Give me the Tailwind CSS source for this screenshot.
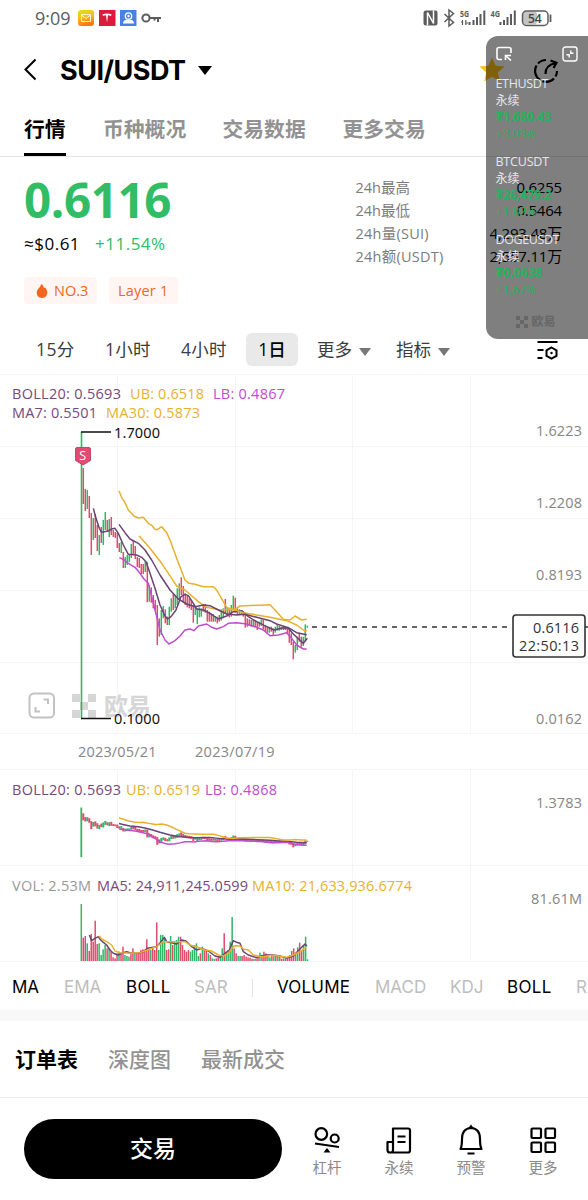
<!DOCTYPE html>
<html lang="zh-CN">
<head>
<meta charset="utf-8">
<title>SUI/USDT</title>
<script src="https://cdn.jsdelivr.net/npm/@tailwindcss/browser@4"></script>
</head>
<body class="bg-white">
<div class="relative flex h-[1200px] w-[588px] flex-col overflow-hidden bg-white font-['Open_Sans','Noto_Sans_CJK_SC',sans-serif] text-black whitespace-nowrap">

  <!-- status bar -->
  <div class="flex h-9 items-center pl-[35px] pr-[36px] text-[#5c5c5c]">
    <span class="w-[43px] text-[18px] leading-9">9:09</span>
    <svg class="h-4 w-[84px]" viewBox="0 0 84 16">
      <defs><linearGradient id="mail" x1="0" y1="0" x2="0.3" y2="1"><stop offset="0" stop-color="#d8e61c"/><stop offset=".55" stop-color="#fbb81c"/><stop offset="1" stop-color="#f97716"/></linearGradient></defs>
      <rect width="16" height="16" rx="3" fill="url(#mail)"/><path d="M3.500 4.500h9v7h-9zM3.500 5l4.500 3.500L12.500 5" fill="none" stroke="#fff8c0" stroke-width="1"/>
      <rect x="21" width="16.500" height="16" fill="#dc1a3c"/><path d="M24.500 4.200Q29 3 33.500 4.200L33 6Q31 5.200 30 5.300L29 12.500L28 5.300Q27 5.200 25 6Z" fill="#fff"/>
      <rect x="42" width="16.500" height="16" fill="#4a80e4"/><circle cx="50.500" cy="6" r="3.200" fill="none" stroke="#fff" stroke-width="1.300"/><circle cx="50.500" cy="6" r="1.200" fill="#fff"/><path d="M45 13.500Q45 9.500 50.500 9.500T56 13.500Z" fill="#fff"/>
      <g fill="none" stroke="#5c5c5c" stroke-width="2"><circle cx="68" cy="8" r="3.600"/><path d="M71.600 8H83M80 8v4M76.500 8v2.500"/></g>
    </svg>
    <svg class="ml-auto h-5 w-[130px]" viewBox="422 8 130 20">
      <path d="M426 10.500h9.500q2 0 2 2V23q0 2.500-2.500 2.500h-9q-2.500 0-2.500-2.500V13q0-2.500 2.500-2.500Z" fill="#5c5c5c"/>
      <path d="M427.500 25.500V12.500L433.500 23.500V10.500" fill="none" stroke="#fff" stroke-width="1.500"/>
      <path d="M444.500 14L453.500 22.500L449 26V10L453.500 13.500L444.500 22" fill="none" stroke="#5c5c5c" stroke-width="1.500"/>
      <g fill="#5c5c5c" font-family="Open Sans" font-weight="700" font-size="8"><text x="460" y="17" textLength="9" lengthAdjust="spacingAndGlyphs">5G</text><text x="490.500" y="17" textLength="9.500" lengthAdjust="spacingAndGlyphs">4G</text></g>
      <g stroke="#5c5c5c" stroke-width="2" fill="none"><path d="M469.500 25v-3M473.500 25v-5M477 25v-8M480.500 25v-11M484.300 25v-14.500"/><path d="M500.500 25v-3M504 25v-5M507.500 25v-8M511 25v-11M514.800 25v-14.500"/><path d="M462.500 20v5M465.800 20v5M461 22h1M466 23h2" stroke-width="1.200"/></g>
      <rect x="523" y="11.500" width="14" height="13" rx="3" fill="#c4c4c4"/><rect x="522.500" y="11" width="25.500" height="14.500" rx="4" fill="none" stroke="#5c5c5c" stroke-width="1.500"/><path d="M550.500 14.500v7.500" stroke="#5c5c5c" stroke-width="1.800"/>
      <text x="528" y="22.600" font-family="Open Sans" font-weight="600" font-size="12" fill="#444" textLength="13.500">54</text>
    </svg>
  </div>

  <!-- pair header -->
  <div class="flex h-[68px] items-center pl-6">
    <svg class="h-6 w-3" viewBox="0 0 12 24" fill="none" stroke="#000" stroke-width="2"><path d="M11.500 1.500L1.500 11.500L11.500 21.500"/></svg>
    <span class="ml-6 w-[138px] pt-[2px] font-['Inter'] text-[27px] font-bold leading-[66px] tracking-[-0.5px]">SUI/USDT</span>
    <svg class="h-[9px] w-[14px]" viewBox="0 0 14 9"><path d="M0 0h14L7 9Z"/></svg>
    <svg class="ml-auto mr-6 h-7 w-[86px]" viewBox="478 54 86 28">
      <path d="M492 55.500l3.600 8.300 9 .8-6.800 6 2 8.900-7.800-4.700-7.800 4.700 2-8.900-6.800-6 9-.8z" fill="#ffc20e"/>
      <g fill="none" stroke="#000" stroke-width="2.200"><path d="M546 58A11 11 0 0 0 538 61.500M536.500 63.500A11 11 0 0 0 540 78M542.500 79.200A11 11 0 0 0 554 76.500M555.500 74.500A11 11 0 0 0 557 69"/><path d="M545.500 72Q545 63.500 555.500 61M550.500 58.500L556.500 60.800L553.500 66"/></g>
    </svg>
  </div>

  <!-- section tabs -->
  <div class="flex h-[53px] border-b border-[#e4e4e4] pl-6 text-[20.8px] font-bold leading-[50px] text-[#929292]">
    <div class="mr-[37px] h-[52px] w-[42px] border-b-[3px] border-black text-black">行情</div>
    <div class="w-[119.5px]">币种概况</div>
    <div class="w-[120px]">交易数据</div>
    <div>更多交易</div>
  </div>

  <!-- price and 24h figures -->
  <div class="flex h-[176px] pl-6 pr-[26px]">
    <div class="flex w-[331.5px] flex-col">
      <div class="mt-[14px] h-[58px] text-[47.500px] font-bold leading-[58px] tracking-[-0.4px] text-[#31bd65]">0.6116</div>
      <div class="flex h-[30px] text-[17px] font-medium leading-[30px]"><span class="w-[71px] tracking-[0.5px]">≈$0.61</span><span class="tracking-[0.5px] text-[#31bd65]">+11.54%</span></div>
      <div class="mt-[18px] flex h-[27px] gap-3 text-[14.500px] leading-[27px] text-[#ee6723]">
        <div class="flex w-[73px] items-center rounded-sm bg-[#fff5f3] pl-3"><svg class="mr-[6px] h-[14px] w-3" viewBox="0 0 12 14" fill="#f2651f"><path d="M5 0Q8 1.500 7.800 4.300L9 3.300Q11.500 6 11.300 8.800Q11 13.800 6 14Q.8 13.800.7 8.500Q.8 5.500 3 4Q5 2.500 5 0Z"/></svg>NO.3</div>
        <div class="w-[69px] rounded-sm bg-[#fff5f3] pl-[9px] tracking-[0.2px]">Layer 1</div>
      </div>
    </div>
    <div class="flex flex-1 flex-col pt-[19px] text-[14.500px] leading-[23px]">
      <div class="flex justify-between"><span class="text-[#7c7c7c]">24h最高</span><span class="text-[15px] tracking-[-0.2px]">0.6255</span></div>
      <div class="flex justify-between"><span class="text-[#7c7c7c]">24h最低</span><span class="text-[15px] tracking-[-0.2px]">0.5464</span></div>
      <div class="flex justify-between"><span class="tracking-[0.25px] text-[#7c7c7c]">24h量(SUI)</span><span class="text-[15px] tracking-[-0.2px]">4,293.48万</span></div>
      <div class="flex justify-between"><span class="tracking-[0.25px] text-[#7c7c7c]">24h额(USDT)</span><span class="text-[15px] tracking-[-0.2px]">2,557.11万</span></div>
    </div>
  </div>

  <!-- timeframes -->
  <div class="flex h-[41px] pl-[36px] text-[17.500px] leading-[33px] text-[#3c3c3c]">
    <span class="w-[69px] tracking-[0.4px]">15分</span><span class="w-[76px] tracking-[0.3px]">1小时</span><span class="w-[65px] tracking-[0.3px]">4小时</span>
    <span class="h-[33px] w-[52px] rounded-md bg-[#e9e9e9] text-center font-medium text-black">1日</span>
    <span class="ml-[19px] flex w-[79px] items-center gap-[7px] h-[33px]">更多<svg class="mt-1 h-2 w-3" viewBox="0 0 12 8" fill="#777"><path d="M0 0h12L6 8Z"/></svg></span>
    <span class="flex w-[140px] items-center gap-[7px] h-[33px]">指标<svg class="mt-1 h-2 w-3" viewBox="0 0 12 8" fill="#777"><path d="M0 0h12L6 8Z"/></svg></span>
    <svg class="mt-[7px] h-5 w-[22px]" viewBox="0 0 22 20" fill="none" stroke="#000" stroke-width="2"><path d="M1.500 2h20M1.500 10h6M1.500 18h5"/><path d="M15.500 7.500l5 2.800v5.600l-5 2.800-5-2.800v-5.600Z"/><circle cx="15.500" cy="13" r="1.200" fill="#000" stroke="none"/></svg>
  </div>

  <!-- charts -->
  <svg class="h-[590px] w-[588px] shrink-0" viewBox="0 374 588 590" font-family="Open Sans, Noto Sans CJK SC, sans-serif">
    <path d="M0 374.500H588M0 446.500H588M0 518.500H588M0 590.500H588M0 662.500H588M0 733.500H588M0 769.500H588M0 865.500H588M0 961.500H588M117.500 374V733M235.500 374V733M352.500 374V733M470.500 374V733M117.500 769V961M235.500 769V961M352.500 769V961M470.500 769V961" stroke="#f5f5f5" fill="none"/>
    <!-- watermark -->
    <g fill="#d6d6d6"><path d="M72 694h8v8h-8zM88 694h8v8h-8zM80 702h8v8h-8zM72 710h8v8h-8zM88 710h8v8h-8z"/><text x="104" y="714.500" font-size="24" font-weight="700" textLength="47">欧易</text></g>
    <g fill="none" stroke="#c2c2c2" stroke-width="2"><rect x="29.500" y="693.500" width="24.500" height="24" rx="4.500"/><path d="M43.500 699.500h4.500v4.500M35.500 707v4.500h4.500"/></g>
    <g id="candles"></g>
    <g fill="none" stroke-width="1.500" stroke-linejoin="round">
      <g transform="translate(70 530) scale(.33333)">
        <path vector-effect="non-scaling-stroke" stroke="#6b4374" d="M70-65L78-35L88-5L95 7L115 3L125-3L135-5L145 10L160 45L175 73L200 75L215 82L228 95L240 130L255 175L270 225L285 258L293 267L303 260L318 240L333 200L345 193L355 197L370 220L380 237L400 240L420 250L445 267L470 258L490 245L515 242L535 260L560 275L590 290L612 300L640 293L655 295L670 312L700 340L712 325"/>
        <path vector-effect="non-scaling-stroke" stroke="#e8b12b" d="M207 17L240 55L275 100L305 145L320 168L345 180L385 215L410 232L450 240L490 238L520 248L560 255L600 262L650 272L680 285L700 300L710 303"/>
      </g>
      <g id="boll" transform="translate(70 530) scale(.33333)"></g>
      <g id="bollsub" transform="translate(70 824.500) scale(.33333 .0578)"></g>
    </g>
    <path d="M81.500 432V718" stroke="#31b567" stroke-width="1.600"/>
    <path d="M81 432H111M81 718.500H111" stroke="#111" stroke-width="1.600"/>
    <g fill="#111" font-size="14.500" font-family="Noto Sans"><text x="114" y="438" textLength="46">1.7000</text><text x="114" y="724" textLength="46">0.1000</text></g>
    <path d="M77 447.500h12q1.500 0 1.500 1.500v11.500L83 465l-7.500-4.500V449q0-1.500 1.500-1.500Z" fill="#e04b72" stroke="#b83358" stroke-width=".8"/><text x="79.300" y="460" font-size="12.500" fill="#fff">S</text>
    <path d="M312 627H512" stroke="#333" stroke-width="1.500" stroke-dasharray="5 5"/><path d="M585 627h3" stroke="#333" stroke-width="1.500"/>
    <rect x="513" y="615" width="72" height="42" rx="3" fill="#fff" stroke="#333" stroke-width="1.600"/>
    <g fill="#333" font-size="14.500"><text x="533" y="633" textLength="46">0.6116</text><text x="519" y="651" textLength="60">22:50:13</text></g>
    <g font-size="14.500">
      <g fill="#77487d"><text x="12" y="399" textLength="109">BOLL20: 0.5693</text><text x="12" y="418" textLength="85">MA7: 0.5501</text><text x="12" y="795" textLength="109">BOLL20: 0.5693</text><text x="97" y="891" textLength="151">MA5: 24,911,245.0599</text></g>
      <g fill="#e8b12b"><text x="130" y="399" textLength="74">UB: 0.6518</text><text x="106" y="418" textLength="94">MA30: 0.5873</text><text x="126" y="795" textLength="74">UB: 0.6519</text><text x="252" y="891" textLength="160">MA10: 21,633,936.6774</text></g>
      <g fill="#c04cd0"><text x="213" y="399" textLength="72">LB: 0.4867</text><text x="205" y="795" textLength="72">LB: 0.4868</text></g>
      <g fill="#999"><text x="12" y="891" textLength="79">VOL: 2.53M</text></g>
      <g fill="#868686"><text x="536" y="436" textLength="46">1.6223</text><text x="536" y="508" textLength="46">1.2208</text><text x="536" y="579.500" textLength="46">0.8193</text><text x="536" y="723.500" textLength="46">0.0162</text><text x="536" y="808" textLength="46">1.3783</text><text x="531" y="904" textLength="51">81.61M</text><text x="78" y="757" textLength="78.500">2023/05/21</text><text x="195" y="757" textLength="79.500">2023/07/19</text></g>
    </g>
    <g id="subcandles"></g>
    <g id="volume"></g>
    <g fill="none" stroke-width="1.500" stroke-linejoin="round" transform="translate(60 870) scale(.33333)">
      <path vector-effect="non-scaling-stroke" stroke="#6b4374" d="M88 195L95 212L105 205L115 200L122 210L130 217L140 225L150 240L160 250L175 255L185 250L200 245L215 250L235 250L250 245L262 235L290 230L303 215L313 202L320 215L335 218L350 222L365 210L378 213L395 230L410 240L425 235L445 243L465 258L480 262L495 250L508 240L520 212L530 217L540 220L550 245L565 255L590 263L605 257L620 255L640 255L660 258L680 264L700 258L712 245L722 235L735 222L741 228"/>
      <path vector-effect="non-scaling-stroke" stroke="#e8b12b" d="M117 197L125 207L140 215L155 225L165 243L180 248L210 250L240 248L262 240L290 230L310 215L330 215L355 215L375 215L390 225L415 232L435 240L455 243L475 255L490 258L505 250L515 235L525 227L540 228L552 238L565 240L580 255L605 260L640 256L680 262L700 255L720 245L738 232"/>
    </g>
  </svg>

  <!-- indicators -->
  <div class="flex h-[46px] shrink-0 items-center overflow-hidden pl-3 pt-px font-['Inter'] text-[17px] text-[#bdbdbd]">
    <span class="w-[52px] shrink-0 text-black">MA</span><span class="w-[62px] shrink-0">EMA</span><span class="w-[68px] shrink-0 tracking-[0.3px] text-black">BOLL</span><span class="w-[58px] shrink-0">SAR</span>
    <span class="mr-6 h-[18px] w-px shrink-0 bg-[#e2e2e2]"></span>
    <span class="w-[98px] shrink-0 tracking-[0.2px] text-black">VOLUME</span><span class="w-[75px] shrink-0">MACD</span><span class="w-[57px] shrink-0">KDJ</span><span class="w-[69px] shrink-0 tracking-[0.3px] text-black">BOLL</span><span class="shrink-0">R</span>
  </div>
  <div class="h-[11px] shrink-0 bg-[#f8f8f8]"></div>

  <!-- order tabs -->
  <div class="flex h-[76px] shrink-0 pl-[15px] text-[21px] font-bold leading-[76px] text-[#929292]">
    <span class="w-[93px] text-black">订单表</span><span class="w-[93px] font-medium">深度图</span><span class="font-medium">最新成交</span>
  </div>

  <!-- bottom bar -->
  <div class="flex h-[103px] shrink-0 border-t border-[#ebebeb] pl-6 pt-[21px]">
    <div class="mr-[9px] h-[60px] w-[258px] rounded-full bg-black text-center text-[23px] font-medium leading-[59px] text-white">交易</div>
    <div class="flex w-[72px] flex-col items-center text-[14.500px] leading-5 text-[#8a8a8a]"><svg class="mt-[7px] h-7 w-7" viewBox="0 0 28 28" fill="none" stroke="#000" stroke-width="2.200"><circle cx="8.300" cy="8" r="5.800"/><circle cx="21.700" cy="12.500" r="4"/><path d="M2 17.500L26 21"/><path d="M14 22l3.500 4.500h-7Z" fill="#000" stroke="none"/></svg><span class="mt-[4px]">杠杆</span></div>
    <div class="flex w-[72px] flex-col items-center text-[14.500px] leading-5 text-[#8a8a8a]"><svg class="mt-[7px] h-7 w-7" viewBox="0 0 28 28" fill="none" stroke="#000" stroke-width="2.200" stroke-linejoin="round"><path d="M8 2.500h15q2 0 2 2v20q0 2-2 2H5q-2.500 0-2.500-2.500v-8H8ZM8 15v9.500q0 2-2.500 2M12.500 10.500h8M12.500 16h8"/></svg><span class="mt-[4px]">永续</span></div>
    <div class="flex w-[72px] flex-col items-center text-[14.500px] leading-5 text-[#8a8a8a]"><svg class="mt-[7px] h-7 w-7 overflow-visible" viewBox="0 0 28 28" fill="none" stroke="#000" stroke-width="2.200" stroke-linejoin="round"><path d="M3.500 23Q5 20 5 13Q5 2.500 14 2Q23 2.500 23 13Q23 20 24.500 23ZM10.500 27.500h7"/><path d="M11 2.500L14-1.500L17 2.500Z" fill="#000" stroke="none"/></svg><span class="mt-[4px]">预警</span></div>
    <div class="flex w-[72px] flex-col items-center text-[14.500px] leading-5 text-[#8a8a8a]"><svg class="mt-[7px] h-7 w-7" viewBox="0 0 28 28" fill="none" stroke="#000" stroke-width="2.200"><rect x="2.500" y="2.500" width="9.500" height="9.500" rx="1"/><rect x="16.500" y="2.500" width="9.500" height="9.500" rx="1"/><rect x="2.500" y="16.500" width="9.500" height="9.500" rx="1"/><rect x="16.500" y="16.500" width="9.500" height="9.500" rx="1"/></svg><span class="mt-[4px]">更多</span></div>
  </div>

  <!-- floating ticker window -->
  <div class="absolute left-[486px] top-[36px] flex h-[303px] w-[102px] flex-col rounded-l-xl bg-black/50 pl-[9.5px] text-[12.500px] leading-4 text-[#e6e6ee]">
    <div class="flex h-[40px] justify-between pr-[10px] pt-[10px]">
      <svg class="h-4 w-4" viewBox="0 0 16 16" fill="none" stroke="#fff" stroke-width="1.600"><path d="M6 13.500H3Q1 13.500 1 11.500V3.500Q1 1.500 3 1.500H13Q15 1.500 15 3.500V7M9.500 14V9.500H15M10 10L15 14.500"/></svg>
      <svg class="h-4 w-4" viewBox="0 0 16 16" fill="none" stroke="#fff" stroke-width="1.400"><rect x="1" y="1" width="14" height="14" rx="2.500"/><path d="M8.800 4.500v2.700H11.500M4.500 8.800h2.700V11.500"/></svg>
    </div>
    <div class="flex h-[78px] flex-col"><span class="leading-4 tracking-[-0.35px]">ETHUSDT</span><span class="leading-[17px] text-xs">永续</span><span class="font-bold leading-4 tracking-[-0.25px] text-[#22b45c]">₮1,680.43</span><span class="leading-[17px] text-[#22b45c] tracking-[-0.25px]">+3.03%</span></div>
    <div class="flex h-[78px] flex-col"><span class="leading-4 tracking-[-0.2px]">BTCUSDT</span><span class="leading-[17px] text-xs">永续</span><span class="font-bold leading-4 tracking-[-0.25px] text-[#22b45c]">₮26,479.2</span><span class="leading-[17px] text-[#22b45c] tracking-[-0.25px]">+1.82%</span></div>
    <div class="flex h-[78px] flex-col"><span class="leading-4 tracking-[-0.4px]">DOGEUSDT</span><span class="leading-[17px] text-xs">永续</span><span class="font-bold leading-4 text-[#22b45c]">₮0.0638</span><span class="leading-[17px] text-[#22b45c] tracking-[-0.25px]">+1.67%</span></div>
    <div class="flex items-center gap-1 pl-5 pt-1 text-[12px] font-bold text-[#666]"><svg class="h-3 w-3" viewBox="0 0 12 12" fill="#666"><path d="M0 0h4v4H0zM8 0h4v4H8zM4 4h4v4H4zM0 8h4v4H0zM8 8h4v4H8z"/></svg>欧易</div>
  </div>
</div>

<script>
const NS = 'http://www.w3.org/2000/svg', G = '#31b567', R = '#e04b6e';
const el = (p, n, a) => { const e = document.createElementNS(NS, n); for (const k in a) e.setAttribute(k, a[k]); document.getElementById(p).appendChild(e); };
const bar = (p, x, y1, y2, c, w) => el(p, 'rect', {x: (x - w / 2).toFixed(2), y: y1.toFixed(2), width: w, height: Math.max(1, y2 - y1).toFixed(2), fill: c});
// early candles: high, low and direction, one day per step
const first = 'r468 504,r489 511,g490 509,r496 518,r513 555,g518 540,r514 538,r525 551,g535 555,r527 543,g520 545,g512 530,r520 532,g519 537,r517 535,r530 537,r532 538,r533 548,r543 552,g542 553,r552 568,g557 568,g555 565,g555 562,g544 558,r540 555,r546 559,r557 567,r558 568,r564 574,r564 574,g561 572';
const rest = 'r97 217,g165 215,r172 218,r195 235,r210 240,r225 345,r265 320,g240 315,g228 265,r238 280,r260 285,g230 285,g205 245,r190 240,g195 235,g175 225,g160 210,r142 195,r168 215,r190 225,r198 232,r205 235,r210 240,r225 278,g230 255,g235 282,g232 262,g235 260,r222 245,r222 248,r240 275,r245 275,r250 275,r252 275,g258 275,r260 280,r255 275,g240 272,g235 265,r207 250,g232 258,r240 262,g225 260,g197 240,r203 248,r235 255,g238 255,g240 255,r245 260,r255 293,r265 290,r268 288,r270 290,g270 290,r272 292,r275 300,r275 290,g268 288,r270 298,r285 305,r290 308,g290 308,r290 305,r295 318,g290 308,g283 302,g288 302,r290 300,g290 300,r290 300,r292 310,r295 338,r310 345,r335 388,g345 368,g320 360,r308 335,r320 350,g320 348,g283 335,g287 293';
const candles = [];
first.split(',').forEach((s, i) => { const [a, b] = s.slice(1).split(' ').map(Number); candles.push([83.3 + i * 2, a, b, s[0]]); });
rest.split(',').forEach((s, i) => { const [a, b] = s.slice(1).split(' ').map(Number); candles.push([147.3 + i * 2, 530 + a / 3, 530 + b / 3, s[0]]); });
const sub = y => 807.5 + (y - 432) * .1734;
bar('subcandles', 81.3, sub(432), sub(718), G, 1.8);
for (const [x, a, b, c] of candles) {
  bar('candles', x, a, b, c === 'g' ? G : R, 1.5);
  bar('subcandles', x, sub(a) - .4, sub(b) + .4, c === 'g' ? G : R, 2);
}
// Bollinger bands, shared by both panes
const bands = [
  ['#6b4374', 'M147-17L165 8L180 27L205 40L225 60L245 90L270 135L300 180L325 207L350 222L375 230L400 225L420 227L445 240L470 252L500 255L525 253L560 262L600 272L620 282L655 293L680 308L710 314'],
  ['#e8b12b', 'M147-117L155-98L165-82L175-60L192-42L205-36L220-38L235-20L245-14L255-2L262-1L275-10L290 8L300 30L320 85L345 150L357 160L375 163L400 170L430 170L440 180L460 215L470 232L490 240L510 228L600 224L620 245L640 268L660 270L675 258L695 270L710 268'],
  ['#c04cd0', 'M148 83L160 88L175 100L195 112L210 130L222 147L235 160L245 200L255 240L270 300L285 330L297 342L315 332L330 318L345 300L360 297L372 302L385 288L410 282L425 292L440 297L460 290L475 280L500 278L530 282L555 290L580 300L600 317L625 315L650 308L665 325L680 345L700 357L710 357']
];
for (const [c, d] of bands) for (const p of ['boll', 'bollsub']) el(p, 'path', {d, stroke: c, 'vector-effect': 'non-scaling-stroke'});
document.getElementById('bollsub').parentNode.after(document.getElementById('subcandles'));
document.getElementById('subcandles').after(document.getElementById('bollsub'));
document.getElementById('bollsub').setAttribute('fill', 'none');
document.getElementById('bollsub').setAttribute('stroke-width', '1.5');
// daily volume bars
const vols = 'g102 r203 r198 g220 r243 r192 r215 r152 r222 g220 g255 g238 g225 r235 g235 r245 r262 r265 r250 g245 r250 r230 g255 g258 g260 r250 r235 g248 r250 r252 r240 r238 r243 r208 r235 g240 r232 r240 r157 g240 g195 g195 g205 r240 r238 g198 r225 g215 g210 g200 r200 r225 r240 r245 r240 g245 g240 g225 g220 g258 r250 g230 r240 r243 g250 r255 g265 g267 r265 r262 g255 g235 r190 g245 g240 g215 g141 r235 r250 g258 g258 r258 r255 r260 r262 r263 r266 g267 r266 r262 g248 r260 r245 r250 g255 g262 r258 g255 r255 g255 r260 r266 g265 r265 r260 r255 r243 r235 g248 g232 r218 r240 g225 g200 g268';
vols.split(' ').forEach((s, i) => bar('volume', 81.3 + i * 1.985, 870 + s.slice(1) / 3, 961, s[0] === 'g' ? G : R, 1.5));
</script>
</body>
</html>
